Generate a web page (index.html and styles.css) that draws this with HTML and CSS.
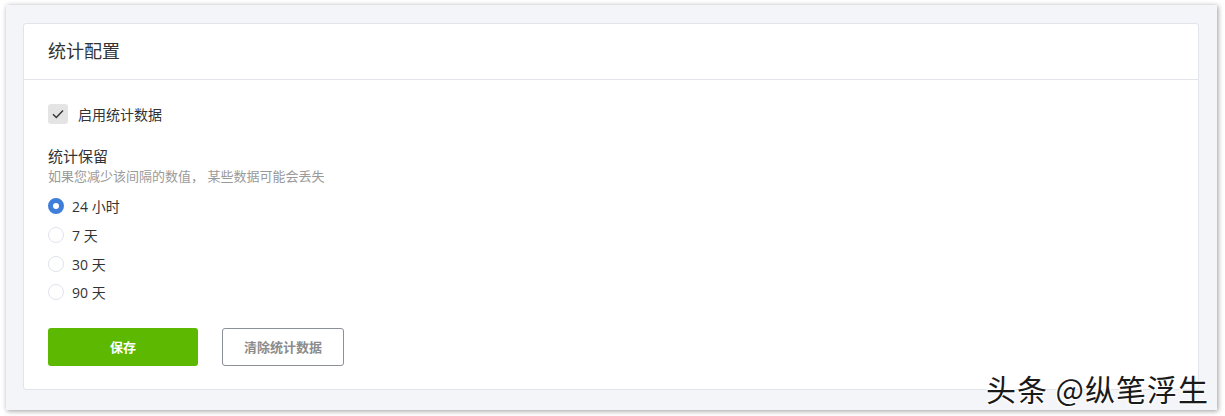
FILE: index.html
```html
<!DOCTYPE html>
<html lang="zh">
<head>
    <meta charset="UTF-8">
    <meta name="viewport" content="width=device-width, initial-scale=1.0">
    <title>统计配置</title>
    <link rel="stylesheet" href="styles.css">
</head>
<body>
    <div class="frame">
        <div class="card">
            <div class="card-header">统计配置</div>
            <div class="card-body">
                <label class="check-row">
                    <span class="checkbox">
                        <svg width="12" height="10" viewBox="0 0 12 10"><path d="M1 5.2 L4.3 8.4 L11 1.4" fill="none" stroke="#333" stroke-width="1.4"/></svg>
                    </span>
                    启用统计数据
                </label>

                <div class="field-title">统计保留</div>
                <div class="field-hint">如果您减少该间隔的数值， 某些数据可能会丢失</div>

                <div class="radio-list">
                    <label class="radio-row"><span class="radio checked"></span>24 小时</label>
                    <label class="radio-row"><span class="radio"></span>7 天</label>
                    <label class="radio-row"><span class="radio"></span>30 天</label>
                    <label class="radio-row"><span class="radio"></span>90 天</label>
                </div>

                <div class="actions">
                    <button class="btn btn-save">保存</button>
                    <button class="btn btn-clear">清除统计数据</button>
                </div>
            </div>
        </div>
        <div class="watermark">头条 @纵笔浮生</div>
    </div>
</body>
</html>
```

FILE: styles.css
```css
body {
    margin: 0;
    background: #ffffff;
    font-family: "Open Sans", "Noto Sans CJK SC", sans-serif;
    color: #333333;
}

/* 外框 */
.frame {
    position: relative;
    margin: 5px 8px 6px 6px;
    height: 405px;
    box-sizing: border-box;
    padding: 18px 18px 20px 17px;
    background: #f4f5f9;
    box-shadow: 1px 1px 5px rgba(0, 0, 0, 0.4);
}

.card {
    background: #ffffff;
    border: 1px solid #e1e4ea;
    border-radius: 3px;
    height: 100%;
    box-sizing: border-box;
}

.card-header {
    height: 55px;
    line-height: 54px;
    padding: 0 24px;
    font-size: 18px;
    color: #333333;
    border-bottom: 1px solid #e3e5ea;
}

.card-body {
    padding: 24px 24px 0;
}

/* 复选框 */
.check-row {
    display: flex;
    align-items: center;
    gap: 10px;
    height: 20px;
    font-size: 14px;
    color: #333333;
}
.checkbox {
    width: 20px;
    height: 20px;
    border-radius: 3px;
    background: #e4e4e4;
    display: flex;
    align-items: center;
    justify-content: center;
}

.field-title {
    margin-top: 22px;
    font-size: 15px;
    line-height: 20px;
    color: #333333;
}
.field-hint {
    margin-top: 1px;
    font-size: 13px;
    line-height: 18px;
    color: #9a9a9a;
}

/* 单选 */
.radio-list {
    margin-top: 7px;
}
.radio-row {
    display: flex;
    align-items: center;
    gap: 8px;
    height: 28.7px;
    font-size: 14px;
    color: #333333;
}
.radio {
    width: 16px;
    height: 16px;
    box-sizing: border-box;
    border-radius: 50%;
    border: 1px solid #dfe3ea;
    background: #ffffff;
}
.radio.checked {
    border: 5px solid #3f7fd9;
    background: #ffffff;
}

/* 按钮 */
.actions {
    margin-top: 21px;
    display: flex;
    gap: 24px;
}
.btn {
    height: 38px;
    border-radius: 3px;
    font-family: "Open Sans", "Noto Sans CJK SC", sans-serif;
    font-size: 13px;
    font-weight: bold;
    cursor: pointer;
}
.btn-save {
    width: 150px;
    background: #5cb800;
    border: none;
    color: #ffffff;
}
.btn-clear {
    width: 122px;
    background: #ffffff;
    border: 1px solid #8c9099;
    color: #8c8c8c;
}

/* 水印 */
.watermark {
    position: absolute;
    right: 8px;
    bottom: 4px;
    font-family: "Noto Sans CJK SC", sans-serif;
    font-size: 30px;
    line-height: 36px;
    letter-spacing: 1px;
    color: #1a1a1a;
    text-shadow: 1px 1px 0 #ffffff, -1px -1px 0 #ffffff, 1px -1px 0 #ffffff, -1px 1px 0 #ffffff;
}
```
